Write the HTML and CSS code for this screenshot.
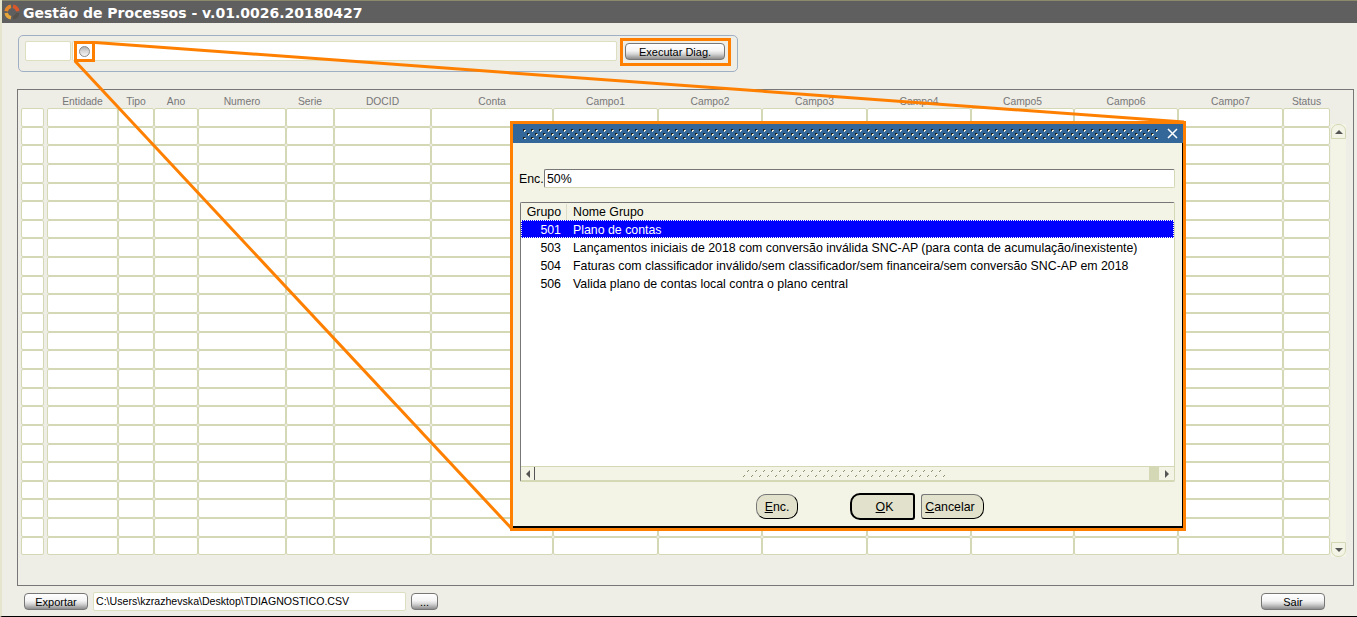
FILE: index.html
```html
<!DOCTYPE html>
<html>
<head>
    <title>Gestão de Processos</title>
    <meta charset="UTF-8">
    <link rel="stylesheet" href="styles.css">
</head>
<body>
<div class="window">
    <div class="titlebar">
        <svg class="logo" width="16" height="16" viewBox="0 0 16 16">
            <path d="M2.2 7.2A6 6 0 0 1 7 2.2" fill="none" stroke="#e8872a" stroke-width="3.5"/>
            <path d="M9 2.2A6 6 0 0 1 13.8 7.2" fill="none" stroke="#d9572b" stroke-width="3.5"/>
            <path d="M2.2 9A6 6 0 0 0 7 13.8" fill="none" stroke="#e8a73a" stroke-width="3.5"/>
            <path d="M9 13.8A6 6 0 0 0 13.8 9" fill="none" stroke="#57534c" stroke-width="3.5"/>
        </svg>
        <span class="title-text">Gestão de Processos - v.01.0026.20180427</span>
    </div>

    <div class="toolbar">
        <div class="field field-code"></div>
        <div class="field field-desc"><span class="radio"></span></div>
        <button class="btn btn-run">Executar Diag.</button>
    </div>

    <div class="panel">
        <div class="grid-wrap">
            <div class="grid-head" id="head"></div>
            <div class="grid-body" id="rows"></div>
        </div>
        <div class="vscroll">
            <div class="arrow-btn arrow-up"><span class="tri-up"></span></div>
            <div class="arrow-btn arrow-down"><span class="tri-down"></span></div>
        </div>
    </div>

    <div class="footer">
        <button class="btn btn-export">Exportar</button>
        <div class="field field-path">C:\Users\kzrazhevska\Desktop\TDIAGNOSTICO.CSV</div>
        <button class="btn btn-dots">...</button>
        <button class="btn btn-exit">Sair</button>
    </div>

    <!-- linhas de destaque laranja -->
    <svg class="callouts" width="1357" height="617" viewBox="0 0 1357 617">
        <path d="M95 42.5L1184 122" stroke="#ff8000" stroke-width="3" fill="none"/>
        <path d="M75 61L512 529" stroke="#ff8000" stroke-width="3" fill="none"/>
    </svg>
    <div class="mark mark-radio"></div>
    <div class="mark mark-btn"></div>

    <div class="modal">
        <div class="modal-title">
            <svg class="grip" height="10">
                <defs>
                    <pattern id="titleDots" width="8" height="8" patternUnits="userSpaceOnUse">
                        <path d="M0 0h2v1h-1v1h-1z" fill="#1d1d1d"/>
                        <path d="M1 1h2v1h-1v1h-1z" fill="#f0f0d8"/>
                        <path d="M4 4h2v1h-1v1h-1z" fill="#1d1d1d"/>
                        <path d="M5 5h2v1h-1v1h-1z" fill="#f0f0d8"/>
                    </pattern>
                </defs>
                <rect width="100%" height="10" fill="url(#titleDots)"/>
            </svg>
            <svg class="close" width="11" height="11" viewBox="0 0 11 11">
                <path d="M1 1L10 10M10 1L1 10" stroke="#fff" stroke-width="1.5" fill="none"/>
            </svg>
        </div>
        <div class="modal-body">
            <div class="search-row">
                <span class="search-label">Enc.</span>
                <div class="search-input">50%</div>
            </div>
            <div class="list">
                <div class="list-head">
                    <span class="col-id">Grupo</span>
                    <span class="col-name">Nome Grupo</span>
                </div>
                <div class="list-rows">
                    <div class="list-row selected"><span class="col-id">501</span><span class="col-name">Plano de contas</span></div>
                    <div class="list-row"><span class="col-id">503</span><span class="col-name">Lançamentos iniciais de 2018 com conversão inválida SNC-AP (para conta de acumulação/inexistente)</span></div>
                    <div class="list-row"><span class="col-id">504</span><span class="col-name">Faturas com classificador inválido/sem classificador/sem financeira/sem conversão SNC-AP em 2018</span></div>
                    <div class="list-row"><span class="col-id">506</span><span class="col-name">Valida plano de contas local contra o plano central</span></div>
                </div>
                <div class="hscroll">
                    <div class="hs-left"><span class="tri-left"></span></div>
                    <div class="hs-track">
                        <svg class="hs-grip" height="9">
                            <defs>
                                <pattern id="scrollDots" width="8" height="9" patternUnits="userSpaceOnUse">
                                    <rect x="5" y="1" width="1" height="1" fill="#8f9070"/>
                                    <rect x="4" y="2" width="1" height="1" fill="#8f9070"/>
                                    <rect x="3" y="3" width="1" height="1" fill="#ffffff"/>
                                    <rect x="1" y="6" width="1" height="1" fill="#8f9070"/>
                                    <rect x="0" y="7" width="1" height="1" fill="#8f9070"/>
                                    <rect x="7" y="8" width="1" height="1" fill="#ffffff"/>
                                </pattern>
                            </defs>
                            <rect width="100%" height="9" fill="url(#scrollDots)"/>
                        </svg>
                    </div>
                    <div class="hs-thumb"></div>
                    <div class="hs-right"><span class="tri-right"></span></div>
                </div>
            </div>
            <div class="modal-actions">
                <button class="mbtn mbtn-find"><u>E</u>nc.</button>
                <button class="mbtn mbtn-ok"><u>O</u>K</button>
                <button class="mbtn mbtn-cancel"><u>C</u>ancelar</button>
            </div>
        </div>
    </div>
</div>

<script>
    var columns = ["", "Entidade", "Tipo", "Ano", "Numero", "Serie", "DOCID", "Conta", "Campo1", "Campo2", "Campo3", "Campo4", "Campo5", "Campo6", "Campo7", "Status"];
    var head = document.getElementById("head");
    var rows = document.getElementById("rows");

    columns.forEach(function (name) {
        var label = document.createElement("div");
        label.className = "head-cell";
        label.textContent = name;
        head.appendChild(label);
    });

    for (var r = 0; r < 24; r++) {
        for (var c = 0; c < columns.length; c++) {
            var cell = document.createElement("div");
            cell.className = c === 0 ? "cell cell-first" : "cell";
            rows.appendChild(cell);
        }
    }
</script>
</body>
</html>
```
FILE: styles.css
```css
* {
    box-sizing: border-box;
}

html, body {
    margin: 0;
    padding: 0;
    overflow: hidden;
}

body {
    background-color: #eeede6;
    font-family: "Liberation Sans", Arial, sans-serif;
    font-size: 12.35px;
    color: #000;
}

.window {
    position: relative;
    width: 1357px;
    height: 617px;
    display: flex;
    flex-direction: column;
    background-color: #eeede6;
    border-left: 2px solid #e4e5cc;
    border-bottom: 1px solid #000;
    overflow: hidden;
}

/* barra de titulo */
.titlebar {
    height: 23px;
    margin-left: -2px;
    display: flex;
    align-items: center;
    padding-left: 4px;
    background-color: #5f5f5f;
    border-top: 1px solid #8b8a6a;
}

.logo {
    flex: none;
}

.title-text {
    margin-left: 3px;
    padding-top: 1px;
    color: #fff;
    font-family: "DejaVu Sans", Verdana, sans-serif;
    font-weight: bold;
    font-size: 14px;
    white-space: nowrap;
}

/* campos e botoes comuns */
.field {
    height: 20px;
    background-color: #fff;
    border: 1px solid #dcdfc0;
    border-radius: 2px;
}

.btn {
    height: 17px;
    padding: 0;
    border: 1px solid #777;
    border-radius: 4px;
    background: linear-gradient(#ffffff 0%, #f4f4f4 45%, #d8d8d8 65%, #8d8d8d 100%);
    font-family: "Liberation Sans", Arial, sans-serif;
    font-size: 11px;
    line-height: 14px;
    color: #000;
}

/* filtro superior */
.toolbar {
    width: 720px;
    height: 37px;
    margin: 12px 0 0 16px;
    padding: 5px 0 0 6px;
    display: flex;
    border: 1px solid #9fb0c4;
    border-radius: 5px;
}

.field-code {
    width: 46px;
}

.field-desc {
    width: 545px;
    margin-left: 1px;
    padding-left: 6px;
    display: flex;
    align-items: center;
}

.radio {
    width: 11px;
    height: 11px;
    border-radius: 50%;
    border: 1px solid #8a8a8a;
    background: linear-gradient(#b0b0b0 0%, #d6d6d6 45%, #f4f4f4 100%);
}

.btn-run {
    width: 100px;
    margin: 2px 0 0 8px;
}

/* painel da grelha */
.panel {
    width: 1337px;
    height: 497px;
    margin: 17px 0 0 15px;
    padding: 7px 0 0 3px;
    display: flex;
    border: 1px solid #777;
}

.grid-wrap {
    width: 1310px;
}

.grid-head,
.grid-body {
    display: grid;
    grid-template-columns: 26px 71px 36px 44px 88px 48px 97px 122px 105px 104px 105px 104px 103px 104px 105px 47px;
}

.grid-head {
    height: 11px;
}

.grid-body {
    grid-auto-rows: 18.65px;
}

.head-cell {
    color: #777;
    font-size: 10.3px;
    line-height: 10px;
    height: 10px;
    text-align: center;
    white-space: nowrap;
}

.cell {
    background-color: #fff;
    border: 1px solid #d5d8b4;
    border-radius: 2px;
}

.cell-first {
    margin-right: 3px;
}

.vscroll {
    width: 15px;
    height: 433px;
    margin-top: 27px;
    display: flex;
    flex-direction: column;
    justify-content: space-between;
    background-color: #f4f4e6;
}

.arrow-btn {
    height: 15px;
    display: flex;
    align-items: center;
    justify-content: center;
    background-color: #f4f4e6;
    border: 1px solid #d5d8b4;
}

.arrow-up {
    border-radius: 7px 7px 0 0;
}

.arrow-down {
    border-radius: 0 0 7px 7px;
}

.tri-up,
.tri-down,
.tri-left,
.tri-right {
    display: block;
    width: 0;
    height: 0;
    border-style: solid;
}

.tri-up {
    border-width: 0 4px 4px;
    border-color: transparent transparent #555;
}

.tri-down {
    border-width: 4px 4px 0;
    border-color: #555 transparent transparent;
}

.tri-left {
    border-width: 4px 4px 4px 0;
    border-color: transparent #555 transparent transparent;
}

.tri-right {
    border-width: 4px 0 4px 4px;
    border-color: transparent transparent transparent #555;
}

/* rodape */
.footer {
    height: 19px;
    margin: 6px 0 0 22px;
    display: flex;
    align-items: center;
}

.btn-export {
    width: 64px;
}

.field-path {
    width: 313px;
    height: 19px;
    margin-left: 5px;
    padding-left: 2px;
    font-size: 10.6px;
    line-height: 17px;
    white-space: nowrap;
}

.btn-dots {
    width: 27px;
    margin-left: 5px;
}

.btn-exit {
    width: 64px;
    margin-left: 823px;
}

/* destaques laranja */
.callouts {
    position: absolute;
    left: -2px;
    top: 0;
    pointer-events: none;
}

.mark {
    position: absolute;
    border: 3px solid #ff8000;
}

.mark-radio {
    left: 72px;
    top: 41px;
    width: 21px;
    height: 21px;
}

.mark-btn {
    left: 618px;
    top: 38px;
    width: 111px;
    height: 28px;
}

/* janela modal */
.modal {
    position: absolute;
    left: 508px;
    top: 121px;
    width: 676px;
    height: 410px;
    display: flex;
    flex-direction: column;
    background-color: #f4f4e6;
    border: 3px solid #ff8000;
}

.modal-title {
    height: 19px;
    display: flex;
    align-items: center;
    padding: 0 5px 0 10px;
    background-color: #336699;
    flex: none;
}

.grip {
    flex: 1;
    min-width: 0;
    display: block;
}

.close {
    flex: none;
    margin-left: 9px;
}

.modal-body {
    flex: 1;
    display: flex;
    flex-direction: column;
    padding: 26px 7px 0 6px;
    border-right: 1px solid #000;
    border-bottom: 2px solid #000;
}

.search-row {
    display: flex;
    align-items: center;
    height: 19px;
}

.search-label {
    width: 25px;
    padding-top: 1px;
}

.search-input {
    flex: 1;
    height: 19px;
    padding: 1px 0 0 2px;
    line-height: 17px;
    background-color: #fff;
    border: 1px solid #d5d8b4;
    border-top-color: #777;
    border-left-color: #777;
    border-radius: 2px;
}

.list {
    height: 280px;
    margin-top: 14px;
    margin-left: 1px;
    display: flex;
    flex-direction: column;
    background-color: #fff;
    border: 1px solid #d5d8b4;
    border-top-color: #777;
    border-left-color: #777;
    border-radius: 2px;
}

.list-head {
    height: 17px;
    display: flex;
    padding-top: 1px;
    line-height: 17px;
    background-color: #f4f4e6;
    flex: none;
}

.list-rows {
    flex: 1;
}

.list-row {
    height: 18px;
    display: flex;
    padding-top: 1px;
    line-height: 18px;
    white-space: nowrap;
}

.col-id {
    width: 45px;
    padding-right: 5px;
    text-align: right;
    flex: none;
}

.col-name {
    padding-left: 7px;
}

.list-head .col-name {
    border-left: 1px solid #dcdcc8;
    padding-left: 6px;
}

.selected {
    color: #fff;
    background-color: #0000ff;
    outline: 1px dotted #fff;
    outline-offset: -1px;
}

.hscroll {
    height: 15px;
    display: flex;
    flex: none;
    background-color: #f4f4e6;
    border-top: 1px solid #d5d8b4;
    border-bottom: 1px solid #d5d8b4;
}

.hs-left,
.hs-right {
    flex: none;
    width: 14px;
    display: flex;
    align-items: center;
    justify-content: center;
}

.hs-left {
    border-right: 1px solid #555;
}

.hs-right {
    width: 15px;
}

.hs-track {
    flex: 1;
    min-width: 0;
    display: flex;
    align-items: center;
    padding: 0 204px 0 208px;
}

.hs-grip {
    flex: 1;
    width: 0;
    min-width: 0;
    display: block;
}

.hs-thumb {
    flex: none;
    width: 10px;
    background-color: #d5d8b4;
}

.modal-actions {
    margin-top: 11px;
    padding-left: 237px;
    display: flex;
    align-items: center;
}

.mbtn {
    height: 25px;
    padding: 0;
    background-color: #e2e2cc;
    border: 1px solid #777;
    border-right-color: #000;
    border-bottom-color: #000;
    border-radius: 10px;
    font-family: "Liberation Sans", Arial, sans-serif;
    font-size: 12.35px;
    color: #000;
}

.mbtn-find {
    width: 42px;
}

.mbtn-ok {
    width: 65px;
    height: 27px;
    margin-left: 52px;
    padding-left: 4px;
    border: 2px solid #000;
    border-radius: 10px 3px 3px 10px;
}

.mbtn-cancel {
    width: 63px;
    margin-left: 6px;
    padding-right: 5px;
    border-radius: 3px 10px 10px 3px;
}
```
